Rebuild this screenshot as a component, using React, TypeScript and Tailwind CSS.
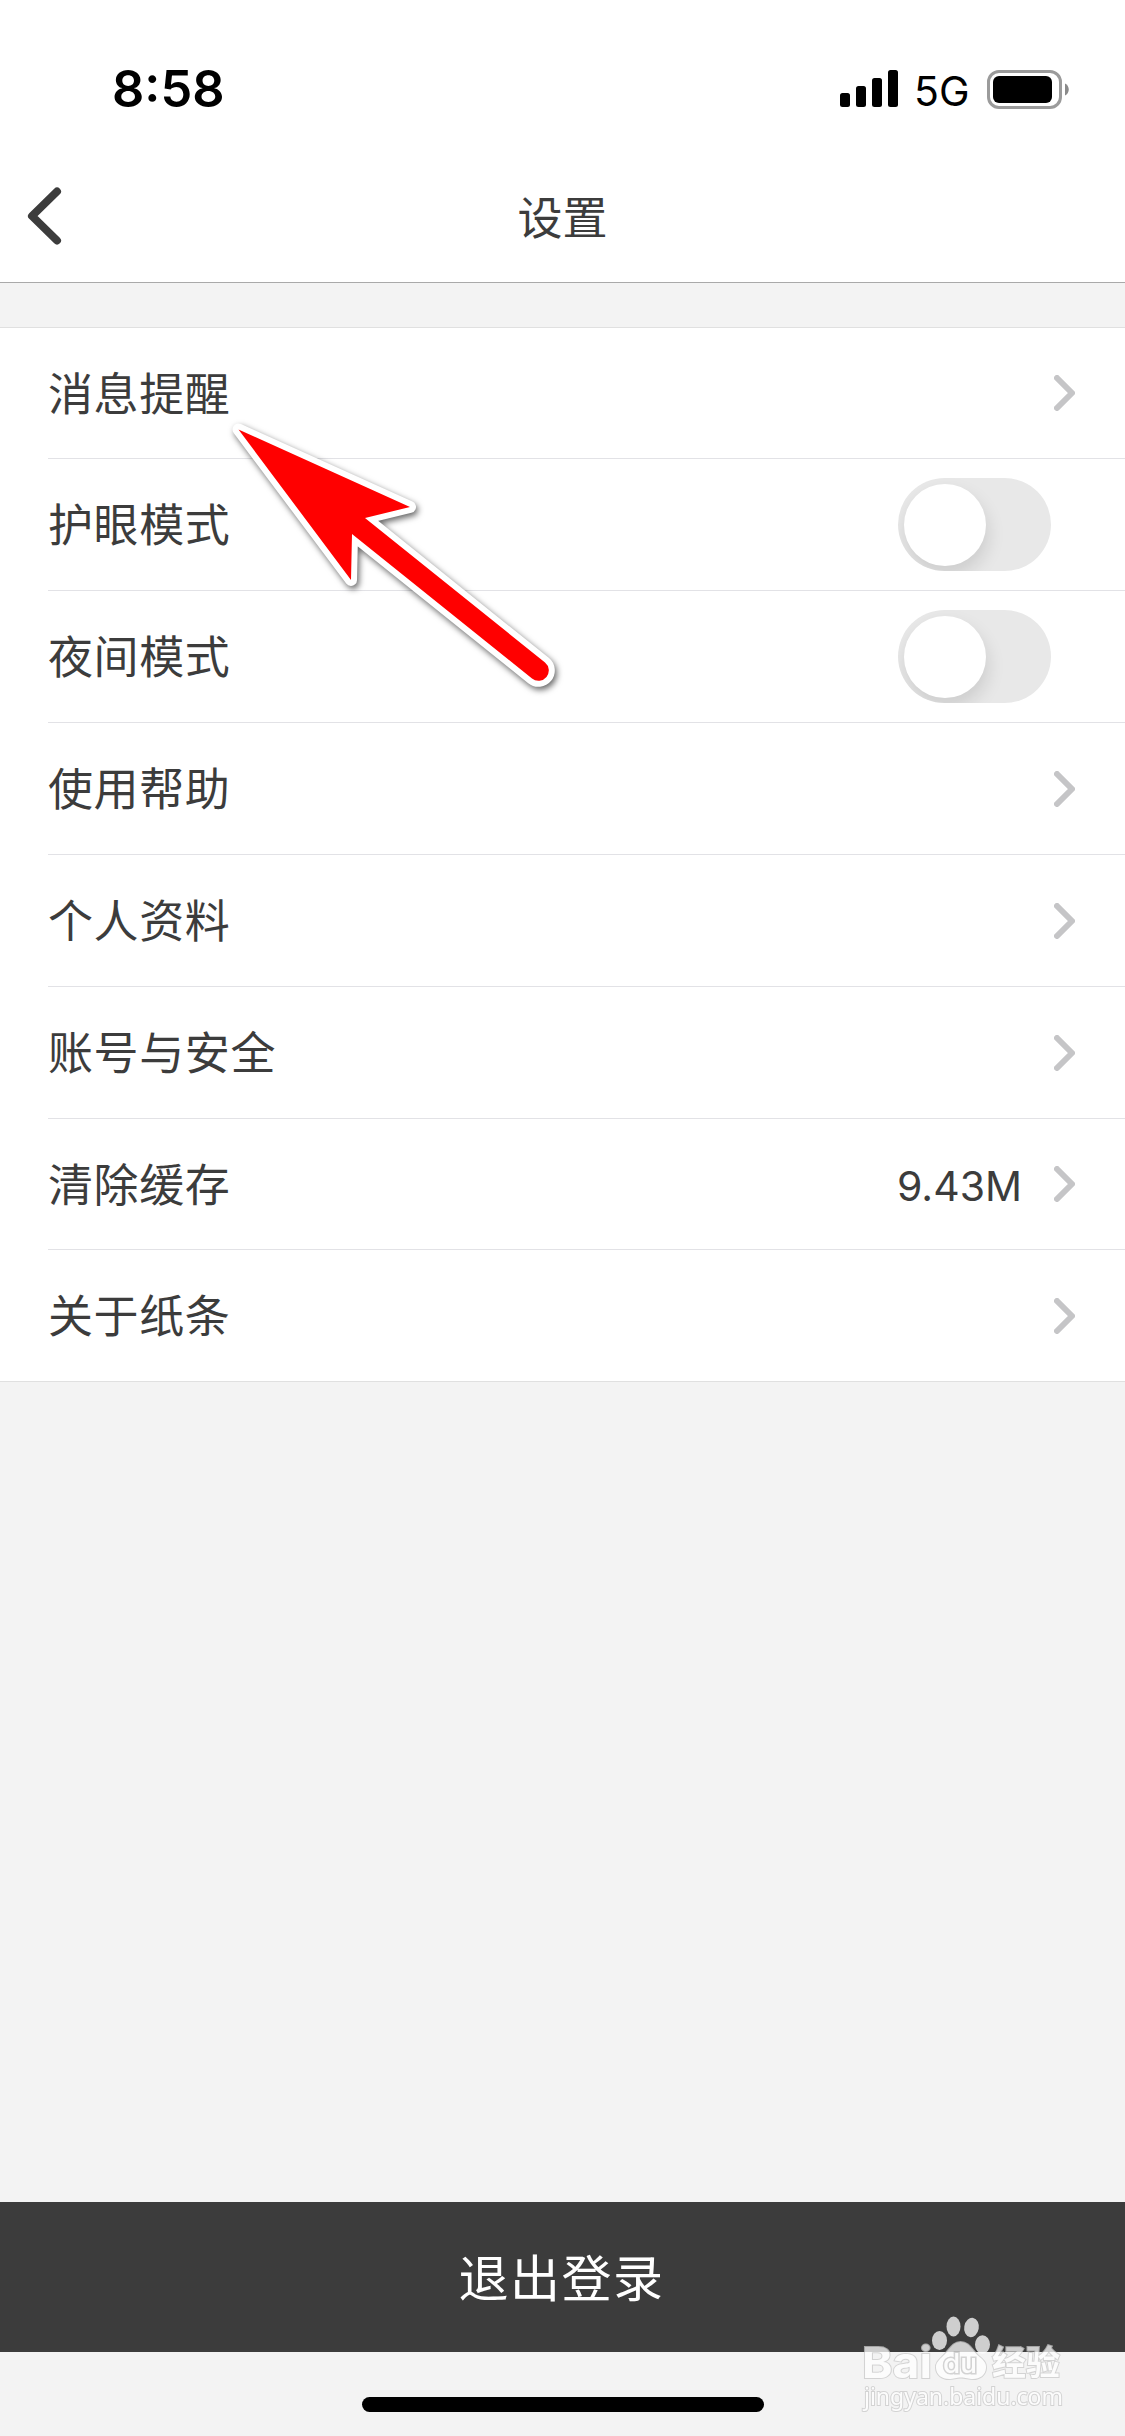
import * as React from "react"
import { cva } from "class-variance-authority"

type SettingItem = {
  label: string
  type: "link" | "switch"
  value?: string
}

const settings: SettingItem[] = [
  { label: "消息提醒", type: "link" },
  { label: "护眼模式", type: "switch" },
  { label: "夜间模式", type: "switch" },
  { label: "使用帮助", type: "link" },
  { label: "个人资料", type: "link" },
  { label: "账号与安全", type: "link" },
  { label: "清除缓存", type: "link", value: "9.43M" },
  { label: "关于纸条", type: "link" },
]

const rowStyle = cva("flex items-center justify-between ml-12 border-b", {
  variants: {
    size: {
      short: "h-[131px]",
      normal: "h-[132px]",
    },
    last: {
      true: "border-transparent",
      false: "border-[#e2e2e6]",
    },
  },
})

function StatusBar() {
  return (
    <div className="flex h-[154px] items-start justify-between pl-[112px] pr-[56px] pt-[59px]">
      <span className="font-['Inter'] text-[50.5px] font-semibold leading-[60px] text-black">8:58</span>
      <div className="flex h-[60px] items-center">
        <svg width="58" height="38" viewBox="0 0 58 38">
          <rect x="0" y="23" width="10" height="14" rx="2.5" />
          <rect x="16" y="16" width="10" height="21" rx="2.5" />
          <rect x="32" y="8" width="10" height="29" rx="2.5" />
          <rect x="48" y="0" width="10" height="37" rx="2.5" />
        </svg>
        <span className="ml-[16px] mt-[3px] w-[57px] whitespace-nowrap font-['Inter'] text-[41px] leading-[60px] text-black">5G</span>
        <svg className="ml-[16px]" width="82" height="39" viewBox="0 0 82 39">
          <rect x="1.5" y="1.5" width="72" height="36" rx="10.5" fill="none" stroke="#9b9b9b" strokeWidth="3" />
          <rect x="6" y="6" width="59" height="27" rx="6" />
          <path d="M78 13.5c5 2 5 10 0 12z" fill="#8a8a8a" />
        </svg>
      </div>
    </div>
  )
}

function NavBar() {
  return (
    <div className="grid h-[128px] grid-cols-3 items-center">
      <button className="ml-[26px] mb-[5px] w-[40px]">
        <svg width="40" height="64" viewBox="0 0 40 64" fill="none">
          <path d="M31 7.500L6 32l25 24.500" stroke="#3c3c3c" strokeWidth="8" strokeLinecap="round" strokeLinejoin="round" />
        </svg>
      </button>
      <h1 className="mb-[4px] text-center text-[45px] leading-[64px] text-[#3c3c3c]">设置</h1>
    </div>
  )
}

function Chevron() {
  return (
    <svg width="21" height="36" viewBox="0 0 21 36" fill="none">
      <path d="M3 3l15 15L3 33" stroke="#c5c5c7" strokeWidth="6" strokeLinecap="round" strokeLinejoin="round" />
    </svg>
  )
}

function Switch() {
  const [on, setOn] = React.useState(false)
  return (
    <button
      role="switch"
      aria-checked={on}
      onClick={() => setOn(!on)}
      className="mr-[74px] flex h-[93px] w-[153px] items-center overflow-hidden rounded-full bg-[#e8e8e8] px-[6px]"
    >
      <span
        className={
          on
            ? "ml-auto h-[82px] w-[82px] rounded-full bg-white"
            : "h-[82px] w-[82px] rounded-full bg-white shadow-[2px_9px_18px_rgba(0,0,0,0.12)]"
        }
      />
    </button>
  )
}

function SettingRow({ item, short, last }: { item: SettingItem; short: boolean; last: boolean }) {
  return (
    <li className={rowStyle({ size: short ? "short" : "normal", last })}>
      <span className="mb-[3px] text-[45px] leading-[64px] tracking-[0.6px] text-[#3c3c3c]">{item.label}</span>
      {item.type === "switch" ? (
        <Switch />
      ) : (
        <div className="mr-[50px] flex items-center gap-[32px]">
          {item.value && (
            <span className="mt-[3px] font-['Inter'] text-[41px] leading-[64px] text-[#3c3c3c]">{item.value}</span>
          )}
          <Chevron />
        </div>
      )}
    </li>
  )
}

function PointerArrow() {
  return (
    <svg
      className="pointer-events-none absolute left-[220px] top-[410px] drop-shadow-[2px_3px_3px_rgba(0,0,0,0.6)]"
      width="350"
      height="300"
      viewBox="220 410 350 300"
    >
      <path
        d="M238.500 429.500L410 507l-45 11 180 144.500a10.300 10.300 0 0 1-13 16L352 534l-1 46z"
        fill="#ff0000"
        stroke="#ffffff"
        strokeWidth="12"
        strokeLinejoin="round"
        paintOrder="stroke"
      />
    </svg>
  )
}

function Watermark() {
  return (
    <svg
      className="pointer-events-none absolute left-[850px] top-[2305px]"
      width="230"
      height="115"
      viewBox="850 2305 230 115"
      opacity="0.75"
      fill="#ffffff"
      stroke="#c9c9c9"
      strokeWidth="2"
      paintOrder="stroke"
    >
      <ellipse cx="939.5" cy="2340.5" rx="7.5" ry="9.5" stroke="none" />
      <ellipse cx="953.5" cy="2326.5" rx="7" ry="10" stroke="none" />
      <ellipse cx="971.5" cy="2327.5" rx="7.3" ry="9.7" transform="rotate(10 971.5 2327.5)" stroke="none" />
      <ellipse cx="982.5" cy="2344.5" rx="7.5" ry="9.3" stroke="none" />
      <path d="M960.500 2342c9 0 12 9 18 14 5 4 8 7 7.500 12-.5 7-6 11-13 11-5 0-7-1.500-12-1.500s-7 1.500-12 1.500c-7 0-12.500-4-13-11-.5-5 3-8 7-12 6-5 9-14 17.500-14z" />
      <text x="862" y="2378" textLength="70" lengthAdjust="spacingAndGlyphs" className="font-['Inter'] text-[43px] font-bold">Bai</text>
      <text x="943" y="2373" textLength="34" lengthAdjust="spacingAndGlyphs" strokeWidth="3" className="font-['Inter'] text-[27px] font-medium">du</text>
      <text x="992" y="2375" textLength="68" lengthAdjust="spacingAndGlyphs" className="font-['Noto_Sans_CJK_SC',sans-serif] text-[34px] font-bold">经验</text>
      <text x="864" y="2404.5" textLength="199" lengthAdjust="spacingAndGlyphs" className="font-['Noto_Sans'] text-[23px]">jingyan.baidu.com</text>
    </svg>
  )
}

export default function App() {
  return (
    <div className="relative flex h-[2436px] w-[1125px] flex-col overflow-hidden bg-[#f3f3f3] font-['Noto_Sans_CJK_SC',sans-serif]">
      <header className="h-[283px] border-b border-[#a9a9a9] bg-white">
        <StatusBar />
        <NavBar />
      </header>

      <ul className="mt-11 border-t border-[#e0e0e0] bg-white">
        {settings.map((item, i) => (
          <SettingRow key={item.label} item={item} short={i === 0 || i === 6} last={i === settings.length - 1} />
        ))}
      </ul>
      <div className="-mt-px h-px bg-[#e0e0e0]" />

      <footer className="mt-auto">
        <button className="flex h-[150px] w-full items-center justify-center bg-[#3c3c3c] pb-[3px] pr-[2px] text-[50px] tracking-[1.5px] text-white">
          退出登录
        </button>
        <div className="flex h-[84px] justify-center pt-[45px]">
          <div className="h-[15px] w-[402px] rounded-full bg-black" />
        </div>
      </footer>

      <PointerArrow />
      <Watermark />
    </div>
  )
}
